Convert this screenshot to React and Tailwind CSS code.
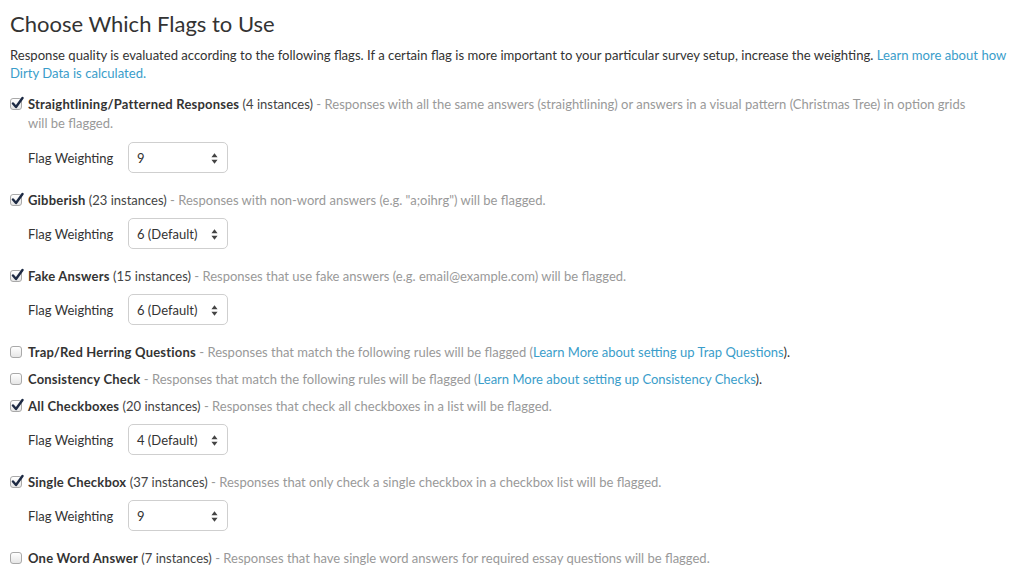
import React from "react";

const flags = [
  {
    name: "Straightlining/Patterned Responses",
    count: "(4 instances)",
    desc: "Responses with all the same answers (straightlining) or answers in a visual pattern (Christmas Tree) in option grids will be flagged.",
    checked: true,
    weight: "9",
    narrow: true,
  },
  {
    name: "Gibberish",
    count: "(23 instances)",
    desc: 'Responses with non-word answers (e.g. "a;oihrg") will be flagged.',
    checked: true,
    weight: "6 (Default)",
  },
  {
    name: "Fake Answers",
    count: "(15 instances)",
    desc: "Responses that use fake answers (e.g. email@example.com) will be flagged.",
    checked: true,
    weight: "6 (Default)",
  },
  {
    name: "Trap/Red Herring Questions",
    desc: "Responses that match the following rules will be flagged (",
    link: "Learn More about setting up Trap Questions",
    checked: false,
  },
  {
    name: "Consistency Check",
    desc: "Responses that match the following rules will be flagged (",
    link: "Learn More about setting up Consistency Checks",
    checked: false,
  },
  {
    name: "All Checkboxes",
    count: "(20 instances)",
    desc: "Responses that check all checkboxes in a list will be flagged.",
    checked: true,
    weight: "4 (Default)",
  },
  {
    name: "Single Checkbox",
    count: "(37 instances)",
    desc: "Responses that only check a single checkbox in a checkbox list will be flagged.",
    checked: true,
    weight: "9",
  },
  {
    name: "One Word Answer",
    count: "(7 instances)",
    desc: "Responses that have single word answers for required essay questions will be flagged.",
    checked: false,
  },
];

function Box({ checked }) {
  return (
    <span className="absolute left-0 top-[3px] w-[12px] h-[12px] rounded-[3px] border border-[#a9a9a9] bg-gradient-to-b from-white to-[#e6e6e6]">
      {checked && (
        <svg viewBox="0 0 14 14" className="absolute -left-[1px] -top-[3px] w-[14px] h-[14px]">
          <path d="M3 7.5 L6 11 L12.5 2" fill="none" stroke="#1d2a44" strokeWidth="2.4" strokeLinecap="round" strokeLinejoin="round" />
        </svg>
      )}
    </span>
  );
}

function Weighting({ value }) {
  return (
    <div className="flex items-center pl-[18px] mt-[9px] mb-[18px]">
      <span className="w-[100px] text-[#333]">Flag Weighting</span>
      <div className="relative w-[100px] h-[31px] border border-[#cfcfcf] rounded-[5px] bg-white flex items-center pl-[8px] text-[#333]">
        {value}
        <svg viewBox="0 0 8 12" className="absolute right-[9px] top-[10px] w-[7px] h-[11px]">
          <path d="M4 0 L7.5 4.5 L0.5 4.5 Z M4 12 L7.5 7.5 L0.5 7.5 Z" fill="#444" />
        </svg>
      </div>
    </div>
  );
}

export default function App() {
  return (
    <div className="bg-white w-[1024px] h-[582px] overflow-hidden px-[10px] pt-[10px] text-[13px] leading-[18px] text-[#333]" style={{ fontFamily: "Lato, 'Open Sans', sans-serif" }}>
      <h1 className="text-[22px] leading-[28px] font-normal text-[#333] mb-[8px]">Choose Which Flags to Use</h1>
      <p className="mb-[13px] text-[13.1px]">
        Response quality is evaluated according to the following flags. If a certain flag is more important to your particular survey setup, increase the weighting.{" "}
        <a className="text-[#3a9dca]">Learn more about how Dirty Data is calculated.</a>
      </p>
      {flags.map((f) => (
        <div key={f.name}>
          <div className={`relative pl-[18px] ${f.narrow ? "max-w-[975px] leading-[19px] mb-[8px]" : "mb-[9px]"}`}>
            <Box checked={f.checked} />
            <span className="font-bold text-[#333] tracking-[0.2px]">{f.name}</span>
            {f.count && <span className="text-[#444]"> {f.count}</span>}
            <span className="text-[#999]">
              {" - "}
              {f.desc}
            </span>
            {f.link && (
              <>
                <a className="text-[#3a9dca]">{f.link}</a>
                <span className="text-[#333]">).</span>
              </>
            )}
          </div>
          {f.weight && <Weighting value={f.weight} />}
        </div>
      ))}
    </div>
  );
}
